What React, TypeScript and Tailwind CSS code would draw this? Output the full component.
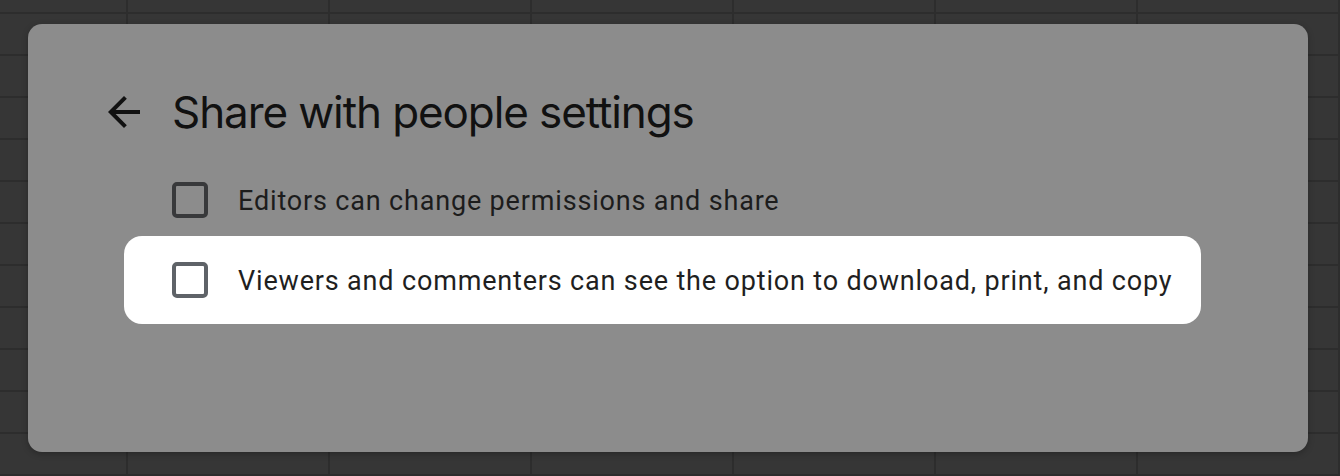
import React from 'react';

function ArrowBack() {
  return (
    <svg viewBox="0 0 24 24" className="w-12 h-12 shrink-0" fill="#111111">
      <path d="M20 11H7.83l5.59-5.59L12 4l-8 8 8 8 1.41-1.41L7.83 13H20v-2z" />
    </svg>
  );
}

function Box({ light }: { light?: boolean }) {
  return (
    <span
      className={
        light
          ? 'block w-9 h-9 shrink-0 rounded-[5px] border-4 border-[#5f6368] bg-white'
          : 'block w-9 h-9 shrink-0 rounded-[5px] border-4 border-[#38393b]'
      }
    />
  );
}

export default function App() {
  return (
    <div className="w-[1340px] h-[476px] overflow-hidden bg-[#363636] bg-[linear-gradient(to_right,#2d2d2d_2px,transparent_2px),linear-gradient(to_bottom,#2d2d2d_2px,transparent_2px)] bg-size-[202px_42px] bg-position-[126px_12px] pt-6 pl-7">
      <div className="w-[1280px] h-[428px] rounded-[14px] bg-[#8c8c8c] pt-16 pl-[72px] shadow-[0_2px_6px_rgba(0,0,0,0.25)]">
        <div className="flex items-center gap-6 h-12">
          <ArrowBack />
          <h1 className="text-[44px] leading-none text-[#111111] font-['Inter',sans-serif] tracking-[-1.1px]">
            Share with people settings
          </h1>
        </div>

        <div className="mt-7 ml-6 flex flex-col font-['Roboto',sans-serif] text-[27px] tracking-[0.83px] text-[#1c1c1c]">
          <label className="flex items-center h-[72px] pl-12">
            <Box />
            <span className="ml-[30px] pt-0.5">Editors can change permissions and share</span>
          </label>
          <label className="flex items-center self-start h-[88px] pl-12 pr-[29px] bg-white rounded-[18px] text-[#1f1f1f]">
            <Box light />
            <span className="ml-[30px] pt-0.5">
              Viewers and commenters can see the option to download, print, and copy
            </span>
          </label>
        </div>
      </div>
    </div>
  );
}
